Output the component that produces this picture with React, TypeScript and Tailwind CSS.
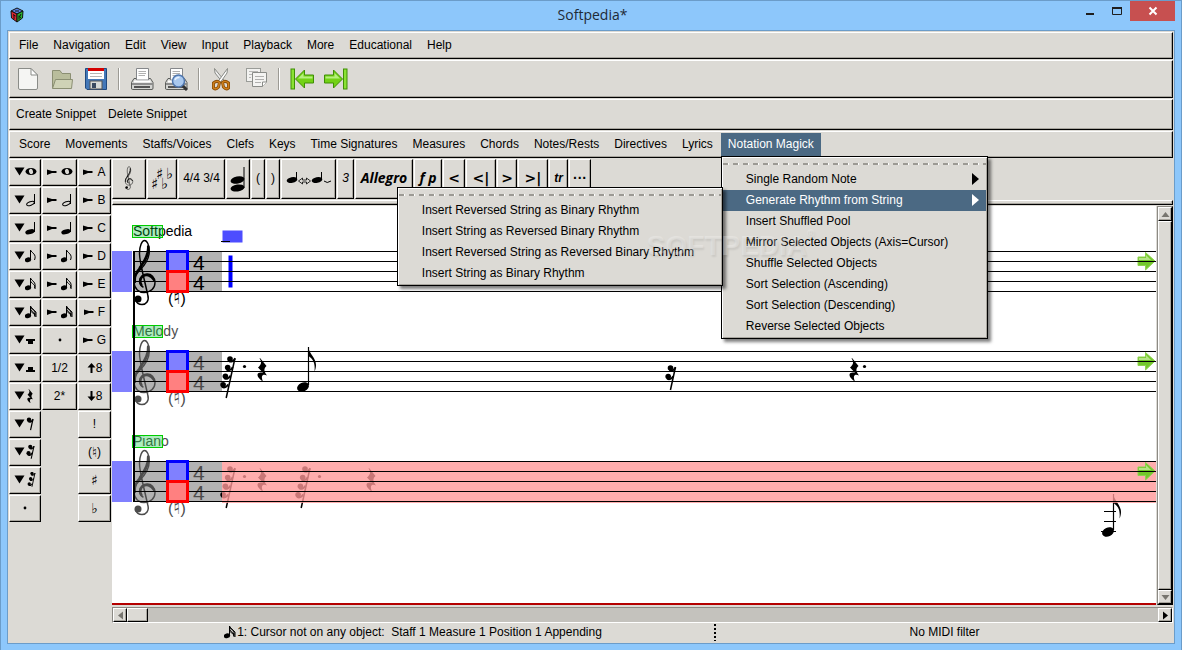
import React from 'react';

const BEVEL =
  'border border-t-white border-l-white border-r-black border-b-black shadow-[inset_-1px_-1px_0_#a8a59e] bg-[#dcdad5]';

const MAIN_MENU = ['File', 'Navigation', 'Edit', 'View', 'Input', 'Playback', 'More', 'Educational', 'Help'];

const NOTATION_MENU = [
  'Score',
  'Movements',
  'Staffs/Voices',
  'Clefs',
  'Keys',
  'Time Signatures',
  'Measures',
  'Chords',
  'Notes/Rests',
  'Directives',
  'Lyrics'
];

const RHYTHM_ITEMS = [
  'Insert Reversed String as Binary Rhythm',
  'Insert String as Reversed Binary Rhythm',
  'Insert Reversed String as Reversed Binary Rhythm',
  'Insert String as Binary Rhythm'
];

const MAGICK_ITEMS = [
  'Insert Shuffled Pool',
  'Mirror Selected Objects (Axis=Cursor)',
  'Shuffle Selected Objects',
  'Sort Selection (Ascending)',
  'Sort Selection (Descending)',
  'Reverse Selected Objects'
];

/* ---------- music glyphs ---------- */

function Clef() {
  return (
    <g fill="none" stroke="currentColor" strokeLinecap="round">
      <path
        strokeWidth="1.4"
        d="M9.8 30 C8.6 24 7.5 19 7.5 14 C7.5 7 10 1.5 12.5 1.5 C15 1.5 17.3 6 17.3 12 C17.3 21 12 27 8 31 C4 35 1.8 39 2 43.5 C2.5 50 7 53.5 12 53.5 C19 53.5 23 49 23 43.5 C23 38 19 35 15.5 35 C11 35 7.5 38 7.5 42 C7.5 45 9 47 11 48"
      />
      <path strokeWidth="2.6" d="M16.2 7.5 C17 16 12 23 8 28.5" />
      <path strokeWidth="2.4" d="M8 29 C3.5 33.5 2.4 38 2.8 43" />
      <path strokeWidth="2.4" d="M22 41 C19 36 14 34.5 10.5 37.5 C8 40 8 43.5 9.5 46" />
      <path strokeWidth="1.5" d="M9.8 30 L15.8 56 C17.5 62 14 65.5 10 65.5 C7 65.5 4.5 64 3.5 61" />
      <circle cx="6" cy="60" r="3.5" fill="currentColor" stroke="none" />
    </g>
  );
}

// rest with one hook per flag, drawn from the top of the slanted stem
function FlagRest({ hooks, stem }: { hooks: number; stem: number }) {
  return (
    <g>
      <path d={`M0 0 L${-stem * 0.22} ${stem}`} stroke="currentColor" strokeWidth="1.5" fill="none" />
      {Array.from({ length: hooks }, (_, i) => (
        <g key={i} transform={`translate(${-i * 2.3} ${i * 8.6})`}>
          <circle cx="-5" cy="1" r="2.8" fill="currentColor" />
          <path d="M-6 3 C-4 4.5 -1.5 3.5 0 0.5" stroke="currentColor" strokeWidth="1.8" fill="none" />
        </g>
      ))}
    </g>
  );
}

function QuarterRest() {
  return (
    <path
      fill="currentColor"
      d="M3 0 L9.5 8 C6.5 11 6.8 13 10 17.5 C5.5 15.5 3.5 18 6 23.5 C1.5 21 -1 16.500 1.5 15 C2.5 14.3 4.5 14.3 6 14.8 L1 9.5 C4.500 6.5 5 4 2.6 0.5 Z"
    />
  );
}

function EighthNote({ stem }: { stem: number }) {
  return (
    <g>
      <ellipse cx="-5" cy="0" rx="6.2" ry="4.4" transform="rotate(-24 -5 0)" fill="currentColor" />
      <path d={`M0.5 -2 V${-stem}`} stroke="currentColor" strokeWidth="1.2" />
      <g transform={`translate(0 ${-stem})`}>
        <path fill="currentColor" d="M0 0 C1.5 7 8 11 8 18 C8 20 7.5 22.5 6.5 24.5 C7.5 16 5 12 0.5 9 Z" />
      </g>
    </g>
  );
}

type NoteKind = 'whole' | 'half' | 'n4' | 'n8' | 'n16' | 'n32';

function NoteIcon({ kind }: { kind: NoteKind }) {
  if (kind === 'whole') {
    return (
      <svg width="12" height="14" viewBox="0 0 12 14">
        <ellipse cx="6" cy="6.5" rx="5.5" ry="3.5" />
        <ellipse cx="6" cy="6.5" rx="2" ry="2.7" transform="rotate(-20 6 6.5)" fill="#dcdad5" />
      </svg>
    );
  }
  const flags = { half: 0, n4: 0, n8: 1, n16: 2, n32: 3 }[kind];
  const x = flags > 0 ? 5.5 : 9.5;
  return (
    <svg width="12" height="14" viewBox="0 0 12 14">
      {kind === 'half' ? (
        <ellipse cx="5.5" cy="10.5" rx="4" ry="1.8" transform="rotate(-20 5.5 10.5)" fill="none" stroke="black" />
      ) : (
        <ellipse cx={flags ? 3 : 5} cy="10.8" rx={flags ? 3.2 : 4.8} ry="2.4" transform={`rotate(-15 ${flags ? 3 : 5} 10.8)`} />
      )}
      <path d={`M${x} 11 V1`} stroke="black" />
      {flags > 0 && <path d="M5.5 1 C6.5 4 12 5 9.5 11" stroke="black" fill="none" />}
      {flags > 1 && <path d="M5.5 4 C6.5 7 11 7 10 12" stroke="black" fill="none" />}
      {flags > 2 && <path d="M5.5 2.5 L11 7 V12 M5.5 6 L10 10" stroke="black" fill="none" />}
    </svg>
  );
}

function RestIcon({ kind }: { kind: string }) {
  return (
    <svg width="11" height="16" viewBox="0 0 11 16">
      {kind === 'whole' && <path d="M1 7 H10 V9 H8 V12 H3 V9 H1 Z" />}
      {kind === 'half' && <path d="M1 12 H10 V10 H8 V7 H3 V10 H1 Z" />}
      {kind === 'quarter' && (
        <g transform="translate(2 1) scale(0.6)">
          <QuarterRest />
        </g>
      )}
      {kind === '8' && (
        <g transform="translate(8 3) scale(0.8)">
          <FlagRest hooks={1} stem={14} />
        </g>
      )}
      {kind === '16' && (
        <g transform="translate(9 2) scale(0.75)">
          <FlagRest hooks={2} stem={17} />
        </g>
      )}
      {kind === '32' && (
        <g transform="translate(10 1) scale(0.6)">
          <FlagRest hooks={3} stem={23} />
        </g>
      )}
    </svg>
  );
}

function Down() {
  return (
    <svg width="11" height="12" viewBox="0 0 11 12">
      <path d="M0.5 1.5 H10.5 L5.5 9.5 Z" />
    </svg>
  );
}

function Pointer() {
  return (
    <svg width="10" height="12" viewBox="0 0 10 12">
      <path d="M0 3.5 L5 5 H9.500 V7 H5 L0 9 Z" />
    </svg>
  );
}

function VArrow({ up }: { up?: boolean }) {
  return (
    <svg width="9" height="12" viewBox="0 0 9 12">
      <path d={up ? 'M4.5 1 L8.5 5.5 H5.5 V11 H3.5 V5.5 H0.5 Z' : 'M4.5 11 L8.5 6.5 H5.5 V1 H3.5 V6.5 H0.5 Z'} />
    </svg>
  );
}

function Dot() {
  return (
    <svg width="4" height="4" viewBox="0 0 4 4">
      <circle cx="2" cy="2" r="1.4" />
    </svg>
  );
}

/* ---------- toolbar icons ---------- */

function NewIcon() {
  return (
    <svg width="24" height="24" viewBox="0 0 24 24">
      <path d="M2.5 1.5 H15 L21.5 8 V21 Q21.5 22.5 20 22.5 H4 Q2.5 22.5 2.5 21 Z" fill="#f5f5f3" stroke="#8a8c88" />
      <path d="M15 1.5 V8 H21.5 Z" fill="#fff" stroke="#8a8c88" />
    </svg>
  );
}

function OpenIcon() {
  return (
    <svg width="24" height="24" viewBox="0 0 24 24">
      <path d="M2.5 21 V3.5 H10 L12 6.5 H20.5 V21 Z" fill="#b9bd9c" stroke="#8b8f73" />
      <path d="M5.5 12.5 H22.500 L21.5 21.5 H2.5 Z" fill="#cfd2b6" stroke="#8b8f73" />
    </svg>
  );
}

function SaveIcon() {
  return (
    <svg width="24" height="24" viewBox="0 0 24 24">
      <path d="M1.5 1.5 H22.5 V22.5 H3 L1.5 21 Z" fill="#4478b8" stroke="#20497f" />
      <rect x="4" y="2" width="16" height="10" fill="#fff" />
      <rect x="4" y="1" width="16" height="3" fill="#d40000" />
      <path d="M6 6.5 H18 M6 9.5 H18" stroke="#b5b5b5" />
      <rect x="6" y="14" width="12" height="8" fill="#d8dad6" stroke="#555" />
      <rect x="8" y="16" width="4" height="5" fill="#3a4a60" />
    </svg>
  );
}

function PrinterShape() {
  return (
    <g>
      <path d="M4 11.5 H20.5 L23 15.5 V21 Q23 22.5 22 22.5 H2.5 Q1.5 22.5 1.5 21 V15.5 Z" fill="#d3d4d1" stroke="#5b5d5a" />
      <path d="M6.5 13 V1.5 H18.5 V13 Z" fill="#fff" stroke="#85878a" />
      <path d="M8.5 4.5 H16 M8.5 6.5 H16 M8.5 8.5 H15" stroke="#b0b0b0" />
      <path d="M4 14.500 H20.5" stroke="#fff" strokeWidth="2" />
      <path d="M2 17 H22.5" stroke="#777" strokeWidth="1.5" />
      <path d="M4 20 H20" stroke="#444" strokeWidth="1.8" />
    </g>
  );
}

function PrintIcon({ preview }: { preview?: boolean }) {
  return (
    <svg width="24" height="24" viewBox="0 0 24 24">
      <PrinterShape />
      {preview && (
        <g>
          <path d="M18 18 L23 23" stroke="#333" strokeWidth="3" />
          <circle cx="14.5" cy="14" r="6" fill="#a9c8ee" stroke="#4f76ae" strokeWidth="1.5" />
          <path d="M11 13 Q12 10 15.5 10.5" stroke="#e6f1ff" strokeWidth="1.5" fill="none" />
        </g>
      )}
    </svg>
  );
}

function CutIcon() {
  return (
    <svg width="24" height="24" viewBox="0 0 24 24">
      <path d="M4.5 1.5 L5 6 L13 16 L15 14.5 Z" fill="#eee" stroke="#888a85" />
      <path d="M17.5 1.5 L17 6 L10 16 L8 14.5 Z" fill="#fff" stroke="#888a85" />
      <path d="M3.500 16 Q7 13 9.5 15.500 L8.5 20 Q6 23 3.5 21 Z" fill="none" stroke="#8a4f08" strokeWidth="3" />
      <path d="M18.5 16 Q15 13 12.500 15.500 L13.5 20 Q16 23 18.5 21 Z" fill="none" stroke="#8a4f08" strokeWidth="3" />
      <path d="M3.5 16 Q7 13 9.500 15.5 L8.500 20 Q6 23 3.5 21 Z" fill="none" stroke="#cf7f1c" strokeWidth="1.4" />
      <path d="M18.5 16 Q15 13 12.5 15.5 L13.500 20 Q16 23 18.500 21 Z" fill="none" stroke="#cf7f1c" strokeWidth="1.4" />
    </svg>
  );
}

function CopyIcon() {
  return (
    <svg width="24" height="24" viewBox="0 0 24 24">
      <rect x="2.5" y="1.5" width="14" height="13" fill="#f2f2f0" stroke="#9a9c98" />
      <path d="M5 4.5 H14 M5 7.5 H8 M5 10.5 H7" stroke="#b8b8b6" />
      <path d="M8.5 5.5 H22.5 V15 L18.5 19.5 H8.5 Z" fill="#f4f4f2" stroke="#8a8c88" />
      <path d="M11 9.5 H20 M11 12.5 H20 M11 15.5 H17" stroke="#b0b0ae" />
      <path d="M22.5 15 H18.5 V19.5" fill="#fff" stroke="#8a8c88" />
    </svg>
  );
}

function GotoIcon({ last }: { last?: boolean }) {
  return (
    <svg width="24" height="24" viewBox="0 0 24 24">
      <g transform={last ? 'translate(24 0) scale(-1 1)' : undefined}>
        <rect x="1" y="2" width="3.5" height="20" fill="#8ae234" stroke="#3f8f05" />
        <path d="M5.5 12 L14.5 3 V8 H23.5 V16 H14.5 V21 Z" fill="#73d216" stroke="#3f8f05" />
        <path d="M8 11.500 L13.5 6 V9.5 H22.5 V11.5 Z" fill="#b6ef7e" />
      </g>
    </svg>
  );
}

function CubeIcon() {
  return (
    <svg width="14" height="16" viewBox="0 0 14 16">
      <path d="M7 1 L13 4 L7 7 L1 4 Z" fill="#5a83e0" stroke="#111" />
      <path d="M1 4 L7 7 V15 L1.5 11 Z" fill="#e0252f" stroke="#111" />
      <path d="M13 4 L7 7 V15 L12.5 11 Z" fill="#27b52e" stroke="#111" />
      <path d="M5 4 H9 M3 7.5 L5.5 9 M4 8 V12 M9 8.5 V12.5 M11 7 L9.5 10 L11 11" stroke="#111" fill="none" />
    </svg>
  );
}

/* ---------- chrome ---------- */

function TitleBar() {
  return (
    <header className="flex h-[29px] shrink-0 items-start">
      <div className="flex flex-1 pt-[6px] pl-[9px]">
        <CubeIcon />
      </div>
      <h1 className="pt-[4px] text-[14px] leading-5 text-[#1e2a36] font-['Open_Sans','Noto_Sans',sans-serif]">Softpedia*</h1>
      <div className="flex flex-1 justify-end pr-[6px]">
        <button aria-label="Minimize" className="flex h-5 w-[27px] items-center justify-center">
          <svg width="10" height="14" viewBox="0 0 10 14">
            <rect x="1" y="9" width="8" height="2" fill="#1e1e1e" />
          </svg>
        </button>
        <button aria-label="Maximize" className="flex h-5 w-[27px] items-center justify-center">
          <svg width="12" height="14" viewBox="0 0 12 14">
            <path d="M1.5 3.5 H10.5 V10.5 H1.5 Z" fill="none" stroke="#1e1e1e" />
            <rect x="1" y="3" width="10" height="2" fill="#1e1e1e" />
          </svg>
        </button>
        <button aria-label="Close" className="flex h-5 w-[45px] items-center justify-center bg-[#c75050]">
          <svg width="10" height="10" viewBox="0 0 10 10">
            <path d="M1.5 1.5 L8.5 8.5 M8.5 1.5 L1.5 8.5" stroke="#fff" strokeWidth="2" />
          </svg>
        </button>
      </div>
    </header>
  );
}

function ToolSeparator() {
  return (
    <div className="flex w-3 justify-center">
      <div className="h-[22px] w-[2px] border-r border-l border-r-white border-l-[#9c9a94]" />
    </div>
  );
}

function ToolIcon({ label, children }: { label: string; children: React.ReactNode }) {
  return (
    <button aria-label={label} className="flex h-full w-[34px] items-center justify-center">
      {children}
    </button>
  );
}

function TearOff() {
  return (
    <div className="flex h-[11px] items-center">
      <div className="h-[2px] w-full bg-[repeating-linear-gradient(90deg,#9c9a94_0_5px,#fff_5px_6px,transparent_6px_10px)]" />
    </div>
  );
}

const MENU_BOX =
  'absolute z-10 border border-black bg-[#dcdad5] p-px shadow-[inset_1px_1px_0_#fff,inset_-1px_-1px_0_#a8a59e,3px_3px_3px_rgba(0,0,0,0.5)]';

const MENU_ITEM = 'flex h-[21px] w-full items-center pb-[2px] pl-[23px]';

function MagickMenu() {
  return (
    <div role="menu" className={`${MENU_BOX} top-full left-0 w-[267px] text-black`}>
      <TearOff />
      <button role="menuitem" className={`${MENU_ITEM} justify-between pr-[6px]`}>
        Single Random Note
        <svg width="8" height="12" viewBox="0 0 8 12">
          <path d="M0 0 L7 6 L0 12 Z" />
        </svg>
      </button>
      <div className="relative">
        <button role="menuitem" className={`${MENU_ITEM} justify-between bg-[#4b6983] pr-[6px] text-white`}>
          Generate Rhythm from String
          <svg width="8" height="12" viewBox="0 0 8 12" fill="#fff">
            <path d="M0 0 L7 6 L0 12 Z" />
          </svg>
        </button>
        <div role="menu" className={`${MENU_BOX} -top-[3px] right-full w-[326px]`}>
          <TearOff />
          {RHYTHM_ITEMS.map((item) => (
            <button key={item} role="menuitem" className={MENU_ITEM}>
              {item}
            </button>
          ))}
        </div>
        {/* watermark across both menus */}
        <div className="pointer-events-none absolute top-[38px] -left-[76px] z-20 flex items-start text-[28px] leading-9 font-bold text-white/25 [text-shadow:1px_2px_2px_rgba(0,0,0,0.08)]">
          SOFTPEDIA<span className="text-[10px] leading-3">®</span>
        </div>
      </div>
      {MAGICK_ITEMS.map((item) => (
        <button key={item} role="menuitem" className={MENU_ITEM}>
          {item}
        </button>
      ))}
    </div>
  );
}

/* ---------- palettes ---------- */

function PaletteButton({ label, children }: { label: string; children: React.ReactNode }) {
  return (
    <button aria-label={label} className={`flex h-[27px] items-center justify-center pb-[2px] ${BEVEL}`}>
      {children}
    </button>
  );
}

const NOTE_KINDS: NoteKind[] = ['whole', 'half', 'n4', 'n8', 'n16', 'n32'];
const REST_KINDS = ['whole', 'half', 'quarter', '8', '16', '32'];

function Palette() {
  return (
    <aside className="flex shrink-0 gap-px pr-px">
      <div className="flex w-8 flex-col gap-px">
        {NOTE_KINDS.map((kind) => (
          <PaletteButton key={kind} label={`Change to ${kind}`}>
            <Down />
            <NoteIcon kind={kind} />
          </PaletteButton>
        ))}
        {REST_KINDS.map((kind) => (
          <PaletteButton key={kind} label={`Rest ${kind}`}>
            <Down />
            <RestIcon kind={kind} />
          </PaletteButton>
        ))}
        <PaletteButton label="Dot">
          <Dot />
        </PaletteButton>
      </div>
      <div className="flex w-[35px] flex-col gap-px">
        {NOTE_KINDS.map((kind) => (
          <PaletteButton key={kind} label={`Insert ${kind}`}>
            <span className="flex items-center gap-1">
              <Pointer />
              <NoteIcon kind={kind} />
            </span>
          </PaletteButton>
        ))}
        <PaletteButton label="Augment">
          <Dot />
        </PaletteButton>
        <PaletteButton label="Half">1/2</PaletteButton>
        <PaletteButton label="Double">2*</PaletteButton>
      </div>
      <div className="flex w-[33px] flex-col gap-px">
        {['A', 'B', 'C', 'D', 'E', 'F', 'G'].map((letter) => (
          <PaletteButton key={letter} label={letter}>
            <span className="flex items-center gap-1">
              <Pointer />
              {letter}
            </span>
          </PaletteButton>
        ))}
        <PaletteButton label="Octave up">
          <VArrow up />8
        </PaletteButton>
        <PaletteButton label="Octave down">
          <VArrow />8
        </PaletteButton>
        <PaletteButton label="Accent">!</PaletteButton>
        <PaletteButton label="Natural">
          (<span className="font-['DejaVu_Sans',sans-serif] text-[14px]">♮</span>)
        </PaletteButton>
        {['♯', '♭'].map((sign) => (
          <PaletteButton key={sign} label={sign}>
            <span className="font-['DejaVu_Sans',sans-serif] text-[14px]">{sign}</span>
          </PaletteButton>
        ))}
      </div>
    </aside>
  );
}

function ScoreButton({ label, width, children }: { label: string; width: string; children: React.ReactNode }) {
  return (
    <button aria-label={label} className={`flex h-10 shrink-0 items-center justify-center pb-[2px] ${width} ${BEVEL}`}>
      {children}
    </button>
  );
}

const BOLD = "font-['DejaVu_Sans',sans-serif] text-[14px] font-bold";

function ScoreToolbar() {
  return (
    <div className="flex gap-px">
      <ScoreButton label="Clef" width="w-[34px]">
        <svg width="10" height="24" viewBox="0 0 25 67" strokeWidth="2">
          <Clef />
        </svg>
      </ScoreButton>
      <ScoreButton label="Key signature" width="w-[30px]">
        <svg width="22" height="28" viewBox="0 0 22 28" className="font-['DejaVu_Sans',sans-serif]" fontSize="15">
          <text x="5" y="15">♯</text>
          <text x="15" y="15">♭</text>
          <text x="0" y="25">♯</text>
          <text x="10" y="25">♭</text>
        </svg>
      </ScoreButton>
      <ScoreButton label="Time signature" width="w-[47px]">4/4 3/4</ScoreButton>
      <ScoreButton label="Chord" width="w-6">
        <svg width="16" height="28" viewBox="0 0 16 28">
          <ellipse cx="7.5" cy="16" rx="7" ry="3.5" transform="rotate(-12 7.5 16)" />
          <ellipse cx="7.5" cy="24" rx="7" ry="3.5" transform="rotate(-8 7.5 24)" />
          <path d="M14 3 V24" stroke="black" />
        </svg>
      </ScoreButton>
      <ScoreButton label="Begin slur" width="w-[14px]">(</ScoreButton>
      <ScoreButton label="End slur" width="w-[14px]">)</ScoreButton>
      <ScoreButton label="Tie" width="w-[55px]">
        <svg width="46" height="20" viewBox="0 0 46 20">
          <ellipse cx="6" cy="12" rx="5.4" ry="2.8" transform="rotate(-12 6 12)" />
          <path d="M10.5 4 V12" stroke="black" />
          <path d="M12.5 13 L16.5 10 V12 H20.5 V10 L24.5 13 L20.5 16 V14 H16.5 V16 Z" fill="none" stroke="black" strokeWidth="0.8" />
          <ellipse cx="31" cy="12" rx="5.4" ry="2.8" transform="rotate(-12 31 12)" />
          <path d="M35.5 4 V12" stroke="black" />
          <path d="M38 13 Q41 16 45 13" fill="none" stroke="black" />
        </svg>
      </ScoreButton>
      <ScoreButton label="Triplet" width="w-[17px]">
        <span className="italic">3</span>
      </ScoreButton>
      <ScoreButton label="Tempo" width="w-[58px]">
        <span className="font-['Open_Sans','Noto_Sans',sans-serif] text-[14px] font-bold italic">Allegro</span>
      </ScoreButton>
      <ScoreButton label="Dynamics" width="w-7">
        <span className="font-['Open_Sans','Noto_Sans',sans-serif] text-[14px] font-bold italic">f p</span>
      </ScoreButton>
      <ScoreButton label="Begin crescendo" width="w-[22px]">
        <span className={BOLD}>&lt;</span>
      </ScoreButton>
      <ScoreButton label="End crescendo" width="w-[30px]">
        <span className={BOLD}>&lt;|</span>
      </ScoreButton>
      <ScoreButton label="Begin diminuendo" width="w-5">
        <span className={BOLD}>&gt;</span>
      </ScoreButton>
      <ScoreButton label="End diminuendo" width="w-[30px]">
        <span className={BOLD}>&gt;|</span>
      </ScoreButton>
      <ScoreButton label="Trill" width="w-[19px]">
        <span className="font-bold italic">tr</span>
      </ScoreButton>
      <ScoreButton label="More" width="w-[22px]">
        <span className="text-[14px] font-bold">···</span>
      </ScoreButton>
    </div>
  );
}

/* ---------- score ---------- */

function StaffHead({ y, name }: { y: number; name: string }) {
  const tone = name === 'Softpedia' ? '#000' : '#4d4d4d';
  return (
    <g transform={`translate(0 ${y})`}>
      <rect x="0" y="0" width="20" height="41" fill="#8080ff" />
      <rect x="21" y="0" width="89" height="41" fill="#b3b3b3" />
      <text x="21" y="-15" fontSize="14" fill={tone}>
        {name}
      </text>
      <rect x="20.5" y="-25.5" width="30" height="12" fill="#00c832" fillOpacity="0.32" stroke="#0c0" />
      <g transform="translate(20 -12)" color={tone}>
        <Clef />
      </g>
      <text x="81" y="19" fontSize="21" fill={tone}>4</text>
      <text x="81" y="39" fontSize="21" fill={tone}>4</text>
      <text x="56" y="53" fontSize="16" fill={tone}>
        (<tspan className="font-['DejaVu_Sans',sans-serif]" fontSize="20">♮</tspan>)
      </text>
    </g>
  );
}

function StaffLines({ y }: { y: number }) {
  return (
    <g>
      <g stroke="#000" shapeRendering="crispEdges">
        {[0, 10, 20, 30, 40].map((dy) => (
          <line key={dy} x1="21" x2="100%" y1={y + dy + 0.5} y2={y + dy + 0.5} />
        ))}
      </g>
      <rect x="55.5" y={y + 0.5} width="20" height="20" fill="#8080ff" stroke="#00f" strokeWidth="3" />
      <rect x="55.5" y={y + 20.5} width="20" height="20" fill="#ff8080" stroke="#f00" strokeWidth="3" />
    </g>
  );
}

function NextArrow({ y }: { y: number }) {
  return (
    <svg x="100%" y={y} overflow="visible" width="1" height="1">
      <path d="M-18 5 H-10.5 V0.5 L-1 9 L-10.5 18 V13.5 H-18 Z" fill="#73c92a" stroke="#8fd24f" />
      <path d="M-17 6 H-10 V3 L-5 8 H-17 Z" fill="#b4e584" />
    </svg>
  );
}

function ScoreView() {
  return (
    <svg className="min-h-[397px] w-full flex-1" fontFamily="'Liberation Sans', sans-serif" role="img" aria-label="Score">
      <StaffHead y={45} name="Softpedia" />
      <StaffHead y={145} name="Melody" />
      <StaffHead y={255} name="Piano" />

      {/* Softpedia: cursor */}
      <rect x="110.5" y="24.5" width="20" height="12" fill="#4d4dff" />
      <path d="M109 35.5 H118" stroke="#000" />
      <rect x="116.500" y="49.5" width="4" height="32" fill="#00f" />

      {/* Melody */}
      <g transform="translate(123 152)"><FlagRest hooks={4} stem={40} /></g>
      <circle cx="132.5" cy="160.5" r="1.6" />
      <g transform="translate(145 152)"><QuarterRest /></g>
      <g transform="translate(196 181)"><EighthNote stem={40} /></g>
      <g transform="translate(563.5 161)"><FlagRest hooks={2} stem={23} /></g>
      <g transform="translate(737 152)"><QuarterRest /></g>
      <circle cx="752.5" cy="160.5" r="1.6" />

      {/* Piano */}
      <g transform="translate(123 262)"><FlagRest hooks={4} stem={40} /></g>
      <circle cx="132.5" cy="270.5" r="1.6" />
      <g transform="translate(145 262)"><QuarterRest /></g>
      <g transform="translate(198 262)"><FlagRest hooks={4} stem={40} /></g>
      <circle cx="207.5" cy="270.5" r="1.6" />
      <g transform="translate(254 262)"><QuarterRest /></g>
      <g transform="translate(1001 326)"><EighthNote stem={38} /></g>
      <path d="M992 305.5 H1004 M992 315.5 H1004 M989 325.5 H1004" stroke="#000" />
      <svg x="110" y="255" overflow="hidden" width="100%" height="42">
        <rect width="100%" height="42" fill="#ff9797" fillOpacity="0.79" />
      </svg>

      <NextArrow y={46} />
      <NextArrow y={146} />
      <NextArrow y={256} />
      <StaffLines y={45} />
      <StaffLines y={145} />
      <StaffLines y={255} />
      <rect x="21" y="45" width="2" height="251" />
    </svg>
  );
}

const TROUGH = 'border border-t-[#8c8a84] border-l-[#8c8a84] bg-[#c4c2bd]';

function ScrollArrow({ label, d, dark, size }: { label: string; d: string; dark?: boolean; size: string }) {
  return (
    <button aria-label={label} className={`flex shrink-0 items-center justify-center ${size} ${BEVEL}`}>
      <svg width="9" height="9" viewBox="0 0 9 9" fill={dark ? '#000' : '#77756f'}>
        <path d={d} />
      </svg>
    </button>
  );
}

function StatusBar() {
  return (
    <footer className="flex h-[19px] shrink-0">
      <div className="flex w-[602px] items-center justify-center gap-px pb-[2px] whitespace-pre">
        <NoteIcon kind="n32" />
        {'1: Cursor not on any object:  Staff 1 Measure 1 Position 1 Appending'}
      </div>
      <div className="my-px w-[2px] bg-[repeating-linear-gradient(180deg,#000_0_2px,transparent_2px_4px)]" />
      <div className="flex flex-1 items-center justify-center pb-[2px]">No MIDI filter</div>
    </footer>
  );
}

export default function App() {
  return (
    <div className="flex min-h-screen flex-col border border-[#6b9cc9] bg-[#8dc7fb] font-['Liberation_Sans',Arial,sans-serif] text-[12px] leading-4 text-black">
      <TitleBar />
      <div className="mx-[6px] mb-[6px] flex flex-1 flex-col gap-px border border-[#6b9cc9] bg-[#dcdad5] p-px">
        <nav className={`flex h-[27px] shrink-0 items-stretch gap-px pl-[2px] ${BEVEL}`}>
          {MAIN_MENU.map((item) => (
            <button key={item} className="px-[7px] pb-[2px]">
              {item}
            </button>
          ))}
        </nav>

        <div className={`flex h-[38px] shrink-0 items-center pl-px ${BEVEL}`}>
          <ToolIcon label="New"><NewIcon /></ToolIcon>
          <ToolIcon label="Open"><OpenIcon /></ToolIcon>
          <ToolIcon label="Save"><SaveIcon /></ToolIcon>
          <ToolSeparator />
          <ToolIcon label="Print"><PrintIcon /></ToolIcon>
          <ToolIcon label="Print preview"><PrintIcon preview /></ToolIcon>
          <ToolSeparator />
          <ToolIcon label="Cut"><CutIcon /></ToolIcon>
          <ToolIcon label="Copy"><CopyIcon /></ToolIcon>
          <ToolSeparator />
          <ToolIcon label="First"><GotoIcon /></ToolIcon>
          <ToolIcon label="Last"><GotoIcon last /></ToolIcon>
        </div>

        <div className={`flex h-[31px] shrink-0 items-center gap-3 pb-[2px] pl-[6px] ${BEVEL}`}>
          <button>Create Snippet</button>
          <button>Delete Snippet</button>
        </div>

        <nav className={`flex h-[27px] shrink-0 items-stretch gap-px py-px pl-[2px] ${BEVEL}`}>
          {NOTATION_MENU.map((item) => (
            <button key={item} className="px-[7px] pb-[2px]">
              {item}
            </button>
          ))}
          <div className="relative flex">
            <button className="bg-[#4b6983] px-[7px] pb-[2px] text-white">Notation Magick</button>
            <MagickMenu />
          </div>
        </nav>

        <div className="flex flex-1">
          <Palette />
          <main className="flex min-w-0 flex-1 flex-col">
            <ScoreToolbar />
            <div className={`my-px h-[5px] shrink-0 ${BEVEL}`} />
            <div className="flex flex-1">
              <div className="flex min-w-0 flex-1 flex-col border-b-2 border-[#b40000] bg-white">
                <ScoreView />
              </div>
              <div className={`ml-px flex w-4 flex-col border-r-black border-b-black ${TROUGH}`}>
                <ScrollArrow label="Scroll up" d="M4.5 2 L8.5 7 H0.5 Z" size="h-[14px]" />
                <div className={`flex-1 ${BEVEL}`} />
                <ScrollArrow label="Scroll down" d="M4.5 7 L8.5 2 H0.5 Z" size="h-[14px]" />
              </div>
            </div>
            <div className={`mt-[2px] flex h-4 shrink-0 border-r-white border-b-white ${TROUGH}`}>
              <ScrollArrow label="Scroll left" d="M2 4.5 L7 0.5 V8.5 Z" size="w-[14px]" />
              <div className={`w-[21px] ${BEVEL}`} />
              <div className="flex-1" />
              <ScrollArrow label="Scroll right" d="M7 4.5 L2 0.5 V8.5 Z" size="w-[14px]" dark />
            </div>
            <StatusBar />
          </main>
        </div>
      </div>
    </div>
  );
}
